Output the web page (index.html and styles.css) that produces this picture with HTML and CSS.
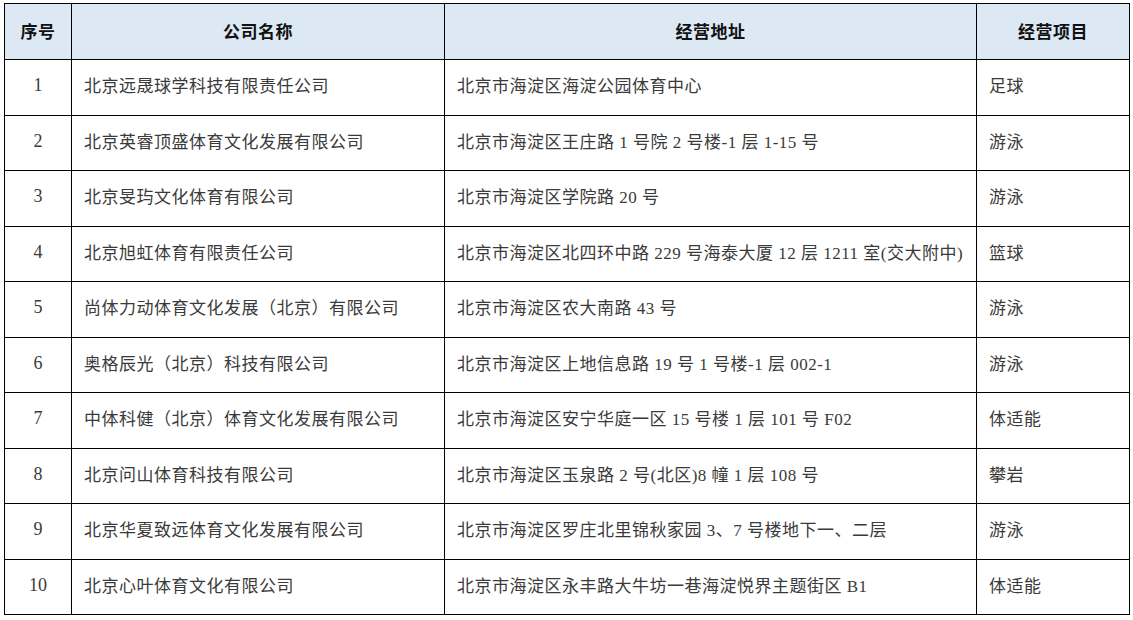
FILE: index.html
```html
<!DOCTYPE html>
<html lang="zh-CN">
<head>
<meta charset="utf-8">
<title>公司列表</title>
<link rel="stylesheet" href="styles.css">
</head>
<body>
<table class="list">
  <colgroup>
    <col class="c-no">
    <col class="c-name">
    <col class="c-addr">
    <col class="c-item">
  </colgroup>
  <thead>
    <tr>
      <th>序号</th>
      <th>公司名称</th>
      <th>经营地址</th>
      <th>经营项目</th>
    </tr>
  </thead>
  <tbody>
    <tr><td class="no">1</td><td>北京远晟球学科技有限责任公司</td><td>北京市海淀区海淀公园体育中心</td><td>足球</td></tr>
    <tr><td class="no">2</td><td>北京英睿顶盛体育文化发展有限公司</td><td>北京市海淀区王庄路 1 号院 2 号楼-1 层 1-15 号</td><td>游泳</td></tr>
    <tr><td class="no">3</td><td>北京旻玙文化体育有限公司</td><td>北京市海淀区学院路 20 号</td><td>游泳</td></tr>
    <tr><td class="no">4</td><td>北京旭虹体育有限责任公司</td><td>北京市海淀区北四环中路 229 号海泰大厦 12 层 1211 室(交大附中)</td><td>篮球</td></tr>
    <tr><td class="no">5</td><td>尚体力动体育文化发展（北京）有限公司</td><td>北京市海淀区农大南路 43 号</td><td>游泳</td></tr>
    <tr><td class="no">6</td><td>奥格辰光（北京）科技有限公司</td><td>北京市海淀区上地信息路 19 号 1 号楼-1 层 002-1</td><td>游泳</td></tr>
    <tr><td class="no">7</td><td>中体科健（北京）体育文化发展有限公司</td><td>北京市海淀区安宁华庭一区 15 号楼 1 层 101 号 F02</td><td>体适能</td></tr>
    <tr><td class="no">8</td><td>北京问山体育科技有限公司</td><td>北京市海淀区玉泉路 2 号(北区)8 幢 1 层 108 号</td><td>攀岩</td></tr>
    <tr><td class="no">9</td><td>北京华夏致远体育文化发展有限公司</td><td>北京市海淀区罗庄北里锦秋家园 3、7 号楼地下一、二层</td><td>游泳</td></tr>
    <tr><td class="no">10</td><td>北京心叶体育文化有限公司</td><td>北京市海淀区永丰路大牛坊一巷海淀悦界主题街区 B1</td><td>体适能</td></tr>
  </tbody>
</table>
</body>
</html>
```
FILE: styles.css
```css
html, body {
  margin: 0;
  padding: 0;
  background: #ffffff;
}

body {
  padding: 3px 0 0 4px;
  font-family: "Liberation Serif", "Noto Sans CJK SC", serif;
}

.list {
  border-collapse: collapse;
  table-layout: fixed;
  width: 1125px;
  color: #3a3a3a;
}

.c-no { width: 67px; }
.c-name { width: 373px; }
.c-addr { width: 532px; }
.c-item { width: 153px; }

.list th,
.list td {
  border: 1px solid #000000;
  vertical-align: middle;
  white-space: nowrap;
  overflow: hidden;
}

.list th {
  height: 53px;
  padding: 0 0 2px 0;
  background: #dde8f5;
  color: #111111;
  font-family: "Noto Sans CJK SC", serif;
  font-weight: 700;
  font-size: 17px;
  letter-spacing: 0.5px;
  text-align: center;
}

.list td {
  height: 49.5px;
  padding: 0 0 5px 12px;
  font-size: 17px;
  letter-spacing: 0.5px;
  text-align: left;
}

.list td.no {
  text-align: center;
  padding: 1px 0 4px 0;
  font-size: 18px;
  letter-spacing: 0;
}
```
